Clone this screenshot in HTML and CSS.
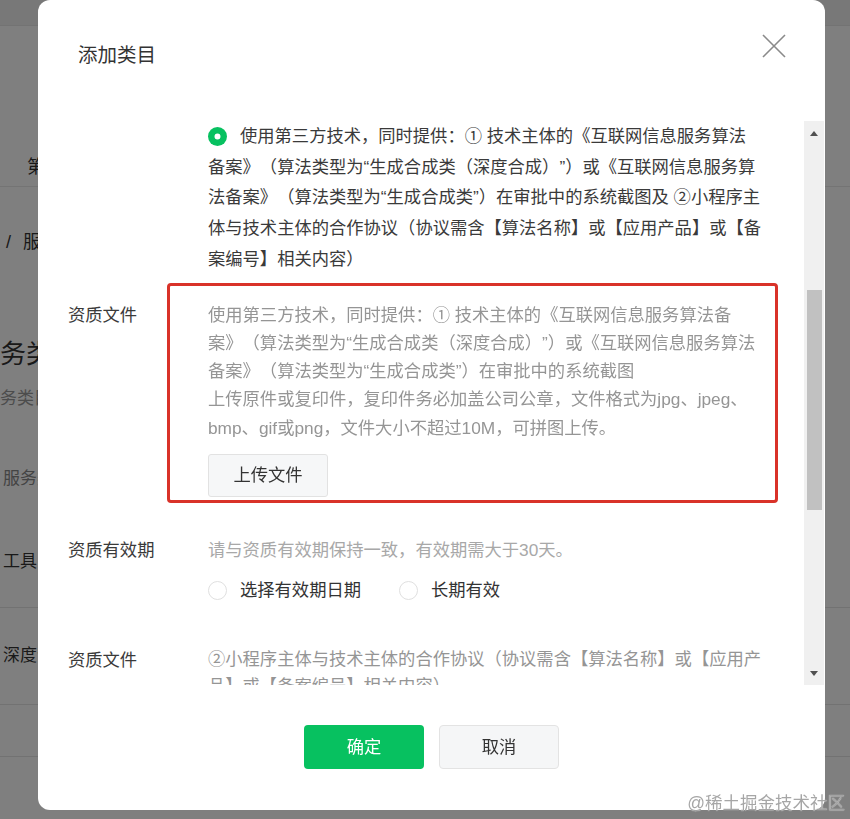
FILE: index.html
```html
<!DOCTYPE html>
<html>

<head>
    <meta charset="utf-8">
    <link rel="stylesheet" href="styles.css">
</head>

<body>
    <!-- 背景页面 -->
    <div class="page">
        <div class="page-top"></div>
        <div class="page-tabs"><span class="tab">第三方服务</span></div>
        <div class="page-crumb"><span class="sep">/</span>服务类目</div>
        <h1 class="page-title">务类目管理</h1>
        <p class="page-desc">务类目说明</p>
        <div class="page-table">
            <div class="row head">服务类目</div>
            <div class="row">工具</div>
            <div class="row">深度合成</div>
            <div class="row short"></div>
        </div>
    </div>

    <div class="mask"></div>

    <div class="dialog">
        <div class="dialog-hd">
            <h2 class="dialog-title">添加类目</h2>
            <a class="dialog-close" href="javascript:;">
                <svg width="24" height="24" viewBox="0 0 24 24">
                    <path d="M1 1L23 23M23 1L1 23" stroke="#8a8a8a" stroke-width="1.6" fill="none" />
                </svg>
            </a>
        </div>

        <div class="dialog-bd">
            <div class="scroll-view">
                <div class="form-row top-row">
                    <div class="form-label"></div>
                    <div class="form-value">
                        <p class="choice-text"><i class="radio checked"></i>使用第三方技术，同时提供：① 技术主体的《互联网信息服务算法<br>备案》（算法类型为“生成合成类（深度合成）”）或《互联网信息服务算<br>法备案》（算法类型为“生成合成类”）在审批中的系统截图及 ②小程序主<br>体与技术主体的合作协议（协议需含【算法名称】或【应用产品】或【备<br>案编号】相关内容）</p>
                    </div>
                </div>

                <div class="form-row file-row">
                    <div class="form-label">资质文件</div>
                    <div class="form-value marked">
                        <p class="tips">使用第三方技术，同时提供：① 技术主体的《互联网信息服务算法备<br>案》（算法类型为“生成合成类（深度合成）”）或《互联网信息服务算法<br>备案》（算法类型为“生成合成类”）在审批中的系统截图<br>上传原件或复印件，复印件务必加盖公司公章，文件格式为jpg、jpeg、<br>bmp、gif或png，文件大小不超过10M，可拼图上传。</p>
                        <a class="upload-btn" href="javascript:;">上传文件</a>
                    </div>
                </div>

                <div class="form-row date-row">
                    <div class="form-label">资质有效期</div>
                    <div class="form-value">
                        <p class="hint">请与资质有效期保持一致，有效期需大于30天。</p>
                        <div class="radio-group">
                            <label class="radio-option"><i class="radio"></i>选择有效期日期</label>
                            <label class="radio-option"><i class="radio"></i>长期有效</label>
                        </div>
                    </div>
                </div>

                <div class="form-row last-row">
                    <div class="form-label">资质文件</div>
                    <div class="form-value">
                        <p class="tips second">②小程序主体与技术主体的合作协议（协议需含【算法名称】或【应用产<br>品】或【备案编号】相关内容）</p>
                    </div>
                </div>
            </div>

            <div class="scrollbar">
                <div class="sb-btn"><i class="arrow-up"></i></div>
                <div class="sb-track"><div class="sb-thumb"></div></div>
                <div class="sb-btn"><i class="arrow-down"></i></div>
            </div>
        </div>

        <div class="dialog-ft">
            <a class="btn btn-primary" href="javascript:;">确定</a>
            <a class="btn btn-default" href="javascript:;">取消</a>
        </div>
    </div>

    <div class="watermark">@稀土掘金技术社区</div>
</body>

</html>
```

FILE: styles.css
```css
html,
body {
    margin: 0;
    padding: 0;
    width: 850px;
    height: 819px;
    overflow: hidden;
    background-color: #fff;
    font-family: "Liberation Sans", "Noto Sans CJK SC", sans-serif;
    color: #333;
    text-spacing-trim: space-all;
}

p,
h1,
h2 {
    margin: 0;
    font-weight: normal;
}

a {
    text-decoration: none;
    color: inherit;
}

/* 背景页面 */
.page {
    width: 850px;
}

.page-top {
    height: 25px;
    background-color: #f0f0f0;
    border-bottom: 1px solid #e6e6e6;
}

.page-tabs {
    height: 160px;
    padding-left: 27px;
    border-bottom: 1px solid #e8e8e8;
    font-size: 18px;
    line-height: 24px;
}

.page-tabs .tab {
    display: inline-block;
    padding-top: 129px;
}

.page-crumb {
    padding: 44px 0 0 6px;
    font-size: 18px;
    line-height: 22px;
}

.page-crumb .sep {
    margin-right: 12px;
}

.page-title {
    margin-top: 83px;
    font-size: 26px;
    line-height: 36px;
}

.page-desc {
    margin-top: 16px;
    font-size: 17px;
    line-height: 22px;
    color: #999;
}

.page-table {
    margin-top: 29px;
    font-size: 17px;
}

.page-table .row {
    height: 88px;
    padding-left: 3px;
    border-bottom: 1px solid #e5e5e5;
    line-height: 86px;
}

.page-table .head {
    height: 80px;
    line-height: 80px;
    color: #888;
    border-bottom: none;
}

.page-table .row:nth-child(3) {
    height: 96px;
    line-height: 96px;
}

.page-table .short {
    height: 51px;
}

.mask {
    position: fixed;
    left: 0;
    top: 0;
    right: 0;
    bottom: 0;
    background-color: rgba(0, 0, 0, 0.5);
}

/* 弹窗 */
.dialog {
    position: fixed;
    left: 38px;
    top: 0;
    width: 787px;
    height: 810px;
    background-color: #fff;
    border-radius: 12px;
    display: flex;
    flex-direction: column;
    font-size: 17.3px;
}

.dialog-hd {
    height: 121px;
    flex-shrink: 0;
    display: flex;
    justify-content: space-between;
    align-items: flex-start;
    padding: 34px 39px 0 40px;
    box-sizing: border-box;
}

.dialog-title {
    margin-top: 6px;
    font-size: 19.5px;
    line-height: 30px;
    color: #333;
}

.dialog-close {
    display: block;
    width: 24px;
    height: 24px;
}

.dialog-close svg {
    display: block;
}

.dialog-bd {
    height: 564px;
    flex-shrink: 0;
    display: flex;
    padding-right: 1px;
}

.scroll-view {
    flex: 1;
    overflow: hidden;
    padding-left: 30px;
}

.form-row {
    display: flex;
}

.form-label {
    width: 140px;
    flex-shrink: 0;
    line-height: 28.3px;
    color: #3a3a3a;
}

.form-value {
    flex: 1;
}

.choice-text {
    line-height: 30.7px;
    color: #3a3a3a;
    white-space: nowrap;
}

.radio {
    display: inline-block;
    width: 19px;
    height: 19px;
    border: 1px solid #e0e0e0;
    border-radius: 50%;
    box-sizing: border-box;
    margin-right: 13px;
    vertical-align: -4px;
}

.radio.checked {
    border: none;
    background-color: #fff;
    box-shadow: inset 0 0 0 6.5px #07c160;
}

.file-row {
    margin-top: 26px;
}

.marked {
    position: relative;
}

/* 红框标注 */
.marked:before {
    content: "";
    position: absolute;
    left: -41px;
    top: -18px;
    width: 611px;
    height: 220px;
    border: 3px solid #d93229;
    border-radius: 4px;
    box-sizing: border-box;
}

.tips {
    line-height: 28.3px;
    color: #959595;
    white-space: nowrap;
}

.upload-btn {
    display: block;
    width: 120px;
    height: 43px;
    margin-top: 12px;
    border: 1px solid #e2e2e2;
    border-radius: 3px;
    background-color: #f6f7f8;
    box-sizing: border-box;
    line-height: 41px;
    text-align: center;
    color: #333;
}

.date-row {
    margin-top: 39px;
}

.hint {
    line-height: 28px;
    color: #a8a8a8;
}

.radio-group {
    display: flex;
    margin-top: 12px;
    line-height: 28px;
}

.radio-option {
    margin-right: 38px;
    color: #333;
}

.last-row {
    margin-top: 42px;
}

.tips.second {
    line-height: 27px;
}

/* 滚动条 */
.scrollbar {
    width: 20px;
    flex-shrink: 0;
    display: flex;
    flex-direction: column;
    background-color: #f0f0f0;
}

.sb-btn {
    height: 24px;
    display: flex;
    align-items: center;
    justify-content: center;
}

.arrow-up,
.arrow-down {
    width: 0;
    height: 0;
    border-left: 4.5px solid transparent;
    border-right: 4.5px solid transparent;
}

.arrow-up {
    border-bottom: 5px solid #505050;
}

.arrow-down {
    border-top: 5px solid #505050;
}

.sb-track {
    flex: 1;
    padding: 145px 2px 0 3px;
}

.sb-thumb {
    height: 220px;
    background-color: #c1c1c1;
}

/* 底部按钮 */
.dialog-ft {
    display: flex;
    justify-content: center;
    gap: 15px;
    padding-top: 40px;
}

.btn {
    display: block;
    width: 120px;
    height: 44px;
    border-radius: 4px;
    box-sizing: border-box;
    line-height: 44px;
    text-align: center;
}

.btn-primary {
    background-color: #07c160;
    color: #fff;
}

.btn-default {
    border: 1px solid #e3e3e3;
    background-color: #f5f6f7;
    line-height: 42px;
    color: #333;
}

.watermark {
    position: fixed;
    right: 5px;
    bottom: 6px;
    font-size: 17.5px;
    line-height: 20px;
    color: rgba(150, 150, 150, 0.85);
    text-shadow: 0 0 1px #fff;
}
```
